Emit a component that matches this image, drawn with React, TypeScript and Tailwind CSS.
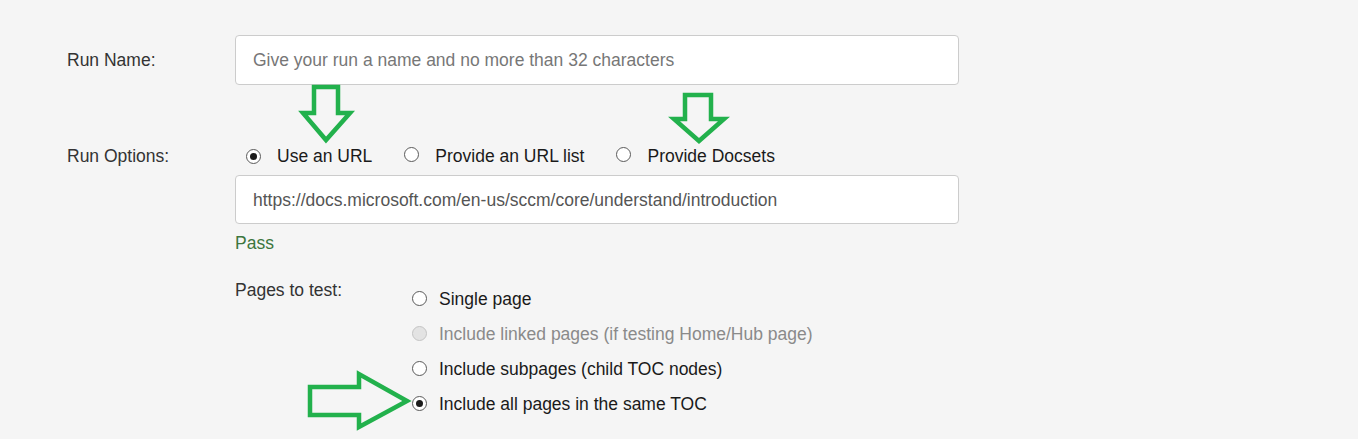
import React from 'react';

const Radio: React.FC<{ checked?: boolean; disabled?: boolean }> = ({ checked, disabled }) => (
  <span
    className={
      'relative inline-flex w-[15px] h-[15px] shrink-0 items-center justify-center rounded-full border ' +
      (disabled ? 'border-[#c4c4c4] bg-[#e3e3e3]' : 'border-[#5a5a5a] bg-white')
    }
  >
    {checked && <span className="w-[7px] h-[7px] rounded-full bg-[#1b1b1b]" />}
  </span>
);

const pages = [
  { label: 'Single page' },
  { label: 'Include linked pages (if testing Home/Hub page)', disabled: true },
  { label: 'Include subpages (child TOC nodes)' },
  { label: 'Include all pages in the same TOC', checked: true },
];

export default function App() {
  return (
    <div
      className="relative w-full h-[439px] overflow-hidden bg-[#f5f5f5] text-[17.5px] leading-[20px] text-[#333]"
      style={{ fontFamily: '"Liberation Sans", Arial, sans-serif' }}
    >
      <div className="flex flex-col pl-[67px] pt-[35px]">
        {/* Run name */}
        <div className="flex items-center">
          <div className="w-[168px]">Run Name:</div>
          <div className="w-[724px] h-[50px] flex items-center px-[17px] bg-white border border-[#ccc] rounded-[4px] text-[#777]">
            Give your run a name and no more than 32 characters
          </div>
        </div>

        {/* Run options */}
        <div className="flex items-center mt-[61px] h-[20px]">
          <div className="w-[168px]">Run Options:</div>
          <div className="flex items-center pl-[11px] text-[#1a1a1a]">
            <Radio checked />
            <span className="ml-[16px]">Use an URL</span>
            <span className="ml-[32px]"><Radio /></span>
            <span className="ml-[16px]">Provide an URL list</span>
            <span className="ml-[32px]"><Radio /></span>
            <span className="ml-[16px]">Provide Docsets</span>
          </div>
        </div>

        <div className="pl-[168px] mt-[9px]">
          <div className="w-[724px] h-[49px] flex items-center px-[17px] bg-white border border-[#ccc] rounded-[4px] text-[#555]">
            https://docs.microsoft.com/en-us/sccm/core/understand/introduction
          </div>
          <div className="mt-[9px] text-[#3c763d]">Pass</div>

          <div className="flex mt-[28px]">
            <div className="w-[177px] -mt-[1px]">Pages to test:</div>
            <div className="flex flex-col">
              {pages.map((p) => (
                <div key={p.label} className="flex items-center h-[35px]">
                  <Radio checked={p.checked} disabled={p.disabled} />
                  <span className={'ml-[12px] ' + (p.disabled ? 'text-[#8a8a8a]' : 'text-[#1a1a1a]')}>
                    {p.label}
                  </span>
                </div>
              ))}
            </div>
          </div>
        </div>
      </div>

      {/* Annotation arrows */}
      <svg className="absolute inset-0 pointer-events-none" width="1358" height="439" viewBox="0 0 1358 439">
        <g fill="none" stroke="#22b14c" strokeWidth="4.5" strokeLinejoin="miter">
          <polygon points="314,87 338,87 338,113 350,113 326,140 303,113 314,113" />
          <polygon points="685,95 711,95 711,119 724,119 699,141 674,119 685,119" />
          <polygon points="310,387 359,387 359,374 407,401 359,427 359,415 310,415" />
        </g>
      </svg>
    </div>
  );
}
